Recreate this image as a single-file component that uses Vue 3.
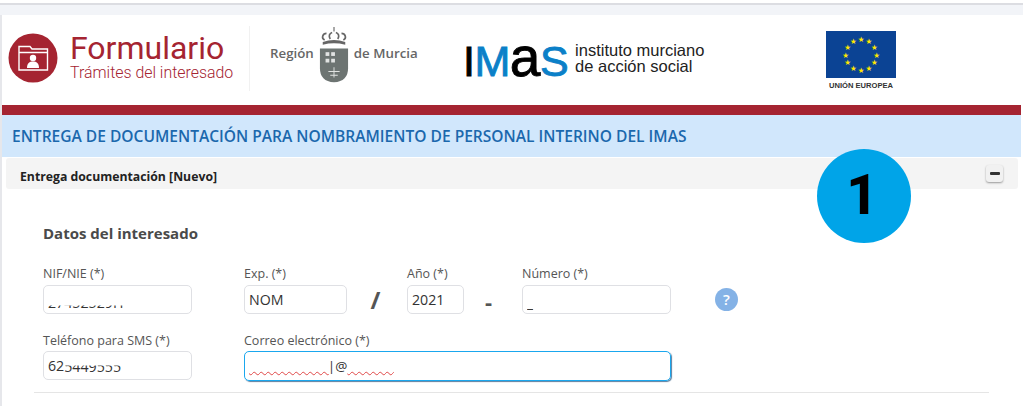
<template>
  <div class="page">
    <div class="topline"></div>
    <div class="frame">
      <header class="brand">
        <div class="form-logo">
          <svg class="form-icon" width="50" height="50" viewBox="0 0 50 50">
            <circle cx="25" cy="25" r="24.5" fill="#a52431" />
            <path d="M11 13.500h11l2 2.500h15.500v21h-28.500z M11 19.500h28.500" fill="none" stroke="#fff" stroke-width="1.400" />
            <circle cx="25" cy="25" r="3.200" fill="#fff" />
            <path d="M19 35c0-5 2.500-6.500 6-6.500s6 1.500 6 6.500z" fill="#fff" />
          </svg>
          <div class="form-text">
            <div class="form-title">Formulario</div>
            <div class="form-sub">Trámites del interesado</div>
          </div>
        </div>
        <div class="vsep"></div>
        <div class="murcia">
          <span>Región</span>
          <svg width="30" height="60" viewBox="0 0 32 60">
            <path d="M16 0v5" stroke="#666" stroke-width="1.200" />
            <path d="M6 14c-4-2-2-7 2-7M12 13c-2-3-1-6 2-7M20 13c2-3 1-6-2-7M26 14c4-2 2-7-2-7" fill="none" stroke="#666" stroke-width="1.800" />
            <path d="M4 16q12-4 24 0v3q-12-3-24 0z" fill="#666" />
            <path d="M1 23h30v21q0 14-15 15Q1 58 1 44z" fill="#6d7472" />
            <g fill="#fff" opacity=".8">
              <rect x="7" y="27" width="4" height="4" /><rect x="13" y="27" width="4" height="4" />
              <rect x="7" y="34" width="4" height="4" /><rect x="13" y="34" width="4" height="4" />
              <path d="M10 47h12v1H10zM15.500 43h1v11h-1zM12 51h8v1h-8z" />
            </g>
          </svg>
          <span>de Murcia</span>
        </div>
        <div class="imas">
          <div class="imas-mark"><span class="bk">I</span><span class="bl">M</span><span class="bk low">a</span><span class="bl">S</span></div>
          <div class="imas-text"><div>instituto murciano</div><div>de acción social</div></div>
        </div>
        <div class="eu">
          <svg width="70" height="47" viewBox="0 0 70 47">
            <rect width="70" height="47" fill="#0b4394" />
            <text v-for="s in stars" :key="s.k" :x="s.x" :y="s.y" class="star" text-anchor="middle">★</text>
          </svg>
          <div class="eu-label">UNIÓN EUROPEA</div>
        </div>
      </header>
      <div class="redbar"></div>
      <h1 class="band">ENTREGA DE DOCUMENTACIÓN PARA NOMBRAMIENTO DE PERSONAL INTERINO DEL IMAS</h1>
      <section class="panel">
        <div class="panel-head">
          <span>Entrega documentación [Nuevo]</span>
          <button class="collapse" aria-label="Contraer"><i></i></button>
        </div>
        <div class="body">
          <h2>Datos del interesado</h2>
          <div class="row">
            <label class="field w149"><span>NIF/NIE (*)</span><div class="input"><b class="cut">27452529H</b></div></label>
            <label class="field w103 gap52"><span>Exp. (*)</span><div class="input">NOM</div></label>
            <div class="sep slash">/</div>
            <label class="field w57"><span>Año (*)</span><div class="input">2021</div></label>
            <div class="sep dash">-</div>
            <label class="field w149"><span>Número (*)</span><div class="input"><b class="cut">_</b></div></label>
            <div class="help">?</div>
          </div>
          <div class="row second">
            <label class="field w149"><span>Teléfono para SMS (*)</span><div class="input">62<b class="cut mid">5449555</b></div></label>
            <label class="field w427 gap52"><span>Correo electrónico (*)</span>
              <div class="input focus"><b class="wavy">{{ blank1 }}</b><em>|@</em><b class="wavy">{{ blank2 }}</b></div>
            </label>
          </div>
          <div class="rule"></div>
        </div>
        <div class="badge">1</div>
      </section>
    </div>
  </div>
</template>

<script setup>
const stars = Array.from({ length: 12 }, (_, i) => {
  const a = (i * Math.PI) / 6
  return { k: i, x: 35 + Math.sin(a) * 15.5, y: 24 - Math.cos(a) * 15.5 }
})
const blank1 = '\u00a0'.repeat(24)
const blank2 = '\u00a0'.repeat(14)
</script>

<style>
html, body { margin: 0; background: #fff; }
</style>

<style scoped>
.page { width: 1023px; height: 406px; overflow: hidden; background: #fff; font-family: "Open Sans", "Noto Sans", sans-serif; }
.topline { height: 2px; margin-top: 3px; background: #dcdde2; }
.frame { height: 401px; box-sizing: border-box; padding: 10px 2px 0 2px; background: linear-gradient(#f2f4f8, #f2f4f8) top/100% 10px no-repeat, linear-gradient(90deg, #e6e7eb 2px, #fff 2px); }
.brand { height: 90px; background: #fff; display: flex; align-items: flex-start; }
.form-logo { display: flex; margin: 18px 0 0 6px; width: 241px; }
.form-icon { flex: none; }
.form-text { margin-left: 12px; color: #a52431; font-family: Roboto, sans-serif; }
.form-title { font-size: 32px; line-height: 31px; }
.form-sub { font-size: 15.900px; font-weight: 300; line-height: 18px; }
.vsep { width: 1px; height: 65px; margin: 11px 0 0 0; background: #f1f1f1; }
.murcia { display: flex; align-items: flex-start; gap: 5px; margin: 10px 0 0 20px; color: #666; font-size: 13.300px; font-weight: 600; width: 190px; }
.murcia span { margin-top: 19px; white-space: nowrap; }
.imas { display: flex; margin: 22px 0 0 3px; width: 358px; }
.imas-mark { font-family: "Liberation Sans", sans-serif; font-size: 43px; line-height: 40px; letter-spacing: -.5px; white-space: nowrap; -webkit-text-stroke: .9px currentColor; }
.bk { color: #000; }
.low { font-size: 55px; line-height: 40px; }
.bl { color: #0b80c8; }
.imas-text { font-family: "Liberation Sans", sans-serif; font-size: 16.500px; line-height: 15.500px; color: #222; margin: 6px 0 0 7px; white-space: nowrap; }
.eu { margin: 16px 0 0 5px; width: 70px; }
.eu svg { display: block; }
.star { font-size: 7.500px; fill: #ffe600; font-family: "DejaVu Sans", sans-serif; dominant-baseline: central; }
.eu-label { font-family: "Liberation Sans", sans-serif; font-size: 7.600px; font-weight: 700; color: #333; text-align: center; margin-top: 3px; white-space: nowrap; }
.redbar { height: 10px; background: #a52431; }
.band { margin: 0; height: 42px; line-height: 42px; padding-left: 10px; background: #d1e7fc; color: #1b68ad; font-size: 15.550px; font-weight: 600; white-space: nowrap; }
.panel { position: relative; margin: 0 0 0 1px; background: #fff; height: 260px; border-top-left-radius: 4px; border-top-right-radius: 4px; padding: 1px 3px 0 3px; }
.panel-head { height: 31px; background: #f4f4f4; border-radius: 3px; display: flex; align-items: center; justify-content: space-between; padding: 0 15px 0 14px; font-size: 12.250px; font-weight: 700; color: #222; }
.panel-head span { margin-top: 6px; }
.collapse { width: 17px; height: 17px; padding: 0; border: 0; border-radius: 3px; background: #f1f1f1; box-shadow: 0 1px 2px #999; display: flex; align-items: center; justify-content: center; }
.collapse i { display: block; width: 10px; height: 3px; border-radius: 1px; background: #333; }
.body { padding: 34px 0 0 37px; }
h2 { margin: 0 0 23px; font-size: 15px; line-height: 20px; font-weight: 700; color: #4a4a4a; }
.row { display: flex; align-items: flex-start; }
.second { margin-top: 17px; }
.second .field > span { margin-bottom: 2px; }
.field { display: block; flex: none; }
.field > span { display: block; font-size: 12.500px; line-height: 16px; color: #555; margin-bottom: 3px; white-space: nowrap; }
.w149 { width: 149px; }
.w103 { width: 103px; }
.w57 { width: 57px; }
.w427 { width: 427px; }
.gap52 { margin-left: 52px; }
.input { box-sizing: border-box; height: 29px; border: 1px solid #dfe0e4; border-radius: 5px; padding: 0 4px; display: flex; align-items: center; font-size: 14.200px; color: #333; overflow: hidden; white-space: nowrap; }
.cut { font-weight: 400; clip-path: inset(66% 0 0 0); transform: translateY(3px); }
.cut.mid { clip-path: inset(45% 0 0 0); transform: translateY(1px); }
.focus { height: 30px; border-color: #1aa7ee; box-shadow: 1px 1px 1px #5b7f9f; }
.focus em { font-style: normal; font-size: 13.500px; margin: -1px 0 0 -1px; }
.wavy { display: block; font-weight: 400; font-size: 12.800px; text-decoration: underline wavy #e04848 1px; text-underline-offset: 1px; transform: translateY(-1px); }
.sep { flex: none; box-sizing: border-box; text-align: center; font-weight: 700; color: #555; }
.slash { width: 60px; padding-right: 3px; font-size: 24px; line-height: 30px; margin-top: 19px; }
.dash { width: 58px; padding-right: 9px; font-size: 22px; line-height: 30px; margin-top: 20px; }
.help { flex: none; width: 23px; height: 23px; margin: 22px 0 0 44px; border-radius: 50%; background: #84b2e6; color: #fff; font-size: 15px; font-weight: 600; line-height: 23px; text-align: center; }
.rule { height: 1px; margin: 11px 29px 0 -9px; background: #e5e5e5; }
.badge { position: absolute; left: 814px; top: -8px; width: 94px; height: 94px; border-radius: 50%; background: #00a4e8; color: #000; font: 800 55px/92px Roboto, sans-serif; text-align: center; text-indent: -4px; }
</style>
